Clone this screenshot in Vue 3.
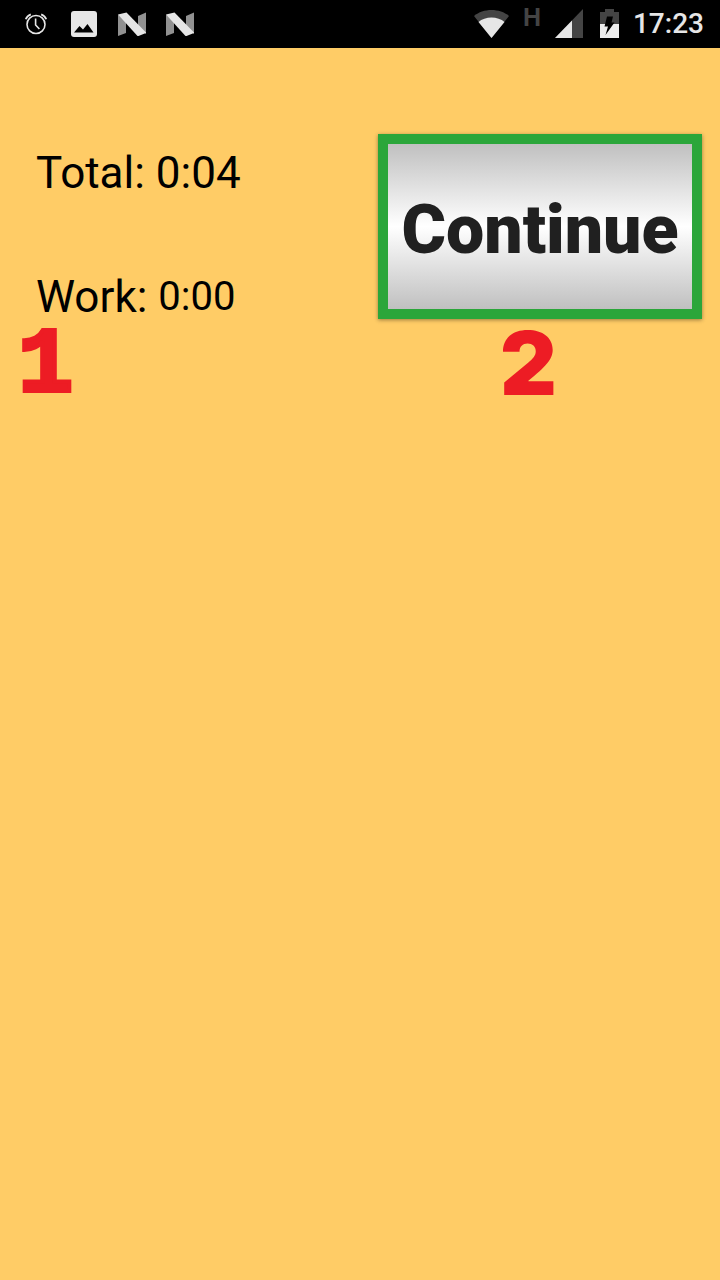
<script setup>
import { ref } from 'vue'

const total = ref('0:04')
const work = ref('0:00')
</script>

<template>
  <div class="screen">
    <header class="status">
      <div class="notifications">
        <svg class="icon" viewBox="0 0 28 28" fill="none" stroke="#e6e6e6">
          <circle cx="14" cy="14.500" r="9" stroke-width="1.600" />
          <path d="M13.600 8.500V15l3.800 4" stroke-width="1.600" />
          <path d="M3.800 9.300C4.600 6.800 6.300 5.200 8.800 4.300M24.200 9.300C23.400 6.800 21.700 5.200 19.200 4.300" stroke-width="1.800" />
        </svg>
        <svg class="icon" viewBox="0 0 28 28">
          <rect x="1" y="1" width="26" height="26" rx="3" fill="#e6e6e6" />
          <path d="M4 22.500L9.500 16L13 19.500L17.500 14L23.500 22.500Z" fill="#000" />
        </svg>
        <svg v-for="n in 2" :key="n" class="icon" viewBox="0 0 28 28">
          <path d="M0 4.500V26L8 23V11ZM28 2.500V24L20 17V6Z" fill="#919191" />
          <path d="M0 4.500L8.500 2.500L28 22.500V23L20.500 26H19.500Z" fill="#e6e6e6" />
        </svg>
      </div>
      <div class="system">
        <svg class="wifi" viewBox="0 0 35 28">
          <path d="M17.500 28L0 6C9-2 26-2 35 6Z" fill="#444" />
          <path d="M17.500 28L4.500 12C11 6 24 6 30.500 12Z" fill="#e6e6e6" />
        </svg>
        <span class="network">H</span>
        <svg class="signal" viewBox="0 0 28 30">
          <path d="M0 29L28 0V29Z" fill="#444" />
          <path d="M0 29L17 11.500V29Z" fill="#e6e6e6" />
        </svg>
        <svg class="battery" viewBox="0 0 19 30">
          <path d="M0 3H5V0H14V3H19V15H0Z" fill="#444" />
          <path d="M0 15H19V29H0Z" fill="#eee" />
          <path d="M7 7.500H13L11.500 13.500H14.500L5.500 26L8 17.500H4.500Z" fill="#000" />
        </svg>
        <time class="clock">17:23</time>
      </div>
    </header>

    <main class="panel">
      <section class="times">
        <p class="row">Total: {{ total }}</p>
        <p class="row work">Work: <span class="value">{{ work }}</span></p>
        <span class="marker first">1</span>
      </section>
      <section class="action">
        <button type="button" class="continue">Continue</button>
        <span class="marker second">2</span>
      </section>
    </main>
  </div>
</template>

<style>
body {
  margin: 0;
  background: #ffcc66;
}
</style>

<style scoped>
.screen {
  min-height: 100vh;
  background: #ffcc66;
  color: #000;
  font-family: Roboto, sans-serif;
}
.status {
  display: flex;
  justify-content: space-between;
  height: 48px;
  padding: 0 16px 0 22px;
  background: #000;
}
.notifications {
  display: flex;
  align-items: center;
  gap: 20px;
}
.icon {
  width: 28px;
  height: 28px;
}
.system {
  display: flex;
  align-items: center;
}
.wifi {
  width: 35px;
  height: 28px;
  margin-right: 14px;
}
.network {
  align-self: flex-start;
  margin: 3px 14px 0 0;
  font-family: "Liberation Sans", sans-serif;
  font-size: 25px;
  line-height: 28px;
  font-weight: 700;
  color: #444;
}
.signal {
  width: 28px;
  height: 30px;
  margin-right: 17px;
}
.battery {
  width: 19px;
  height: 30px;
  margin-right: 14px;
}
.clock {
  font-size: 28px;
  line-height: 52px;
  font-weight: 500;
  color: #e6e6e6;
}
.panel {
  display: grid;
  grid-template-columns: 1fr 1fr;
  gap: 36px;
  padding: 86px 18px 0;
}
.times,
.action {
  display: flex;
  flex-direction: column;
}
.times {
  padding-top: 13px;
}
.row {
  margin: 0;
  padding-left: 18px;
  font-size: 44px;
  line-height: 52px;
}
.work {
  display: flex;
  align-items: center;
  gap: 11px;
  margin-top: 72px;
}
.value {
  font-size: 40px;
}
.continue {
  box-sizing: border-box;
  width: 100%;
  height: 185px;
  padding: 6px 0 0;
  border: 10px solid #2ba63a;
  background: linear-gradient(#c0c0c0, #fff 50%, #c0c0c0);
  box-shadow: 0 1px 4px rgba(0, 0, 0, 0.4);
  color: #202020;
  font-family: Roboto, sans-serif;
  font-size: 68px;
  line-height: 80px;
  font-weight: 900;
}
.marker {
  color: #ed1c24;
  font-size: 88px;
  line-height: 88px;
  font-weight: 900;
}
.first {
  font-family: "Liberation Mono", monospace;
  font-size: 92px;
  -webkit-text-stroke: 4px #ed1c24;
}
.second {
  padding-left: 122px;
  font-family: Inter, sans-serif;
}
</style>
